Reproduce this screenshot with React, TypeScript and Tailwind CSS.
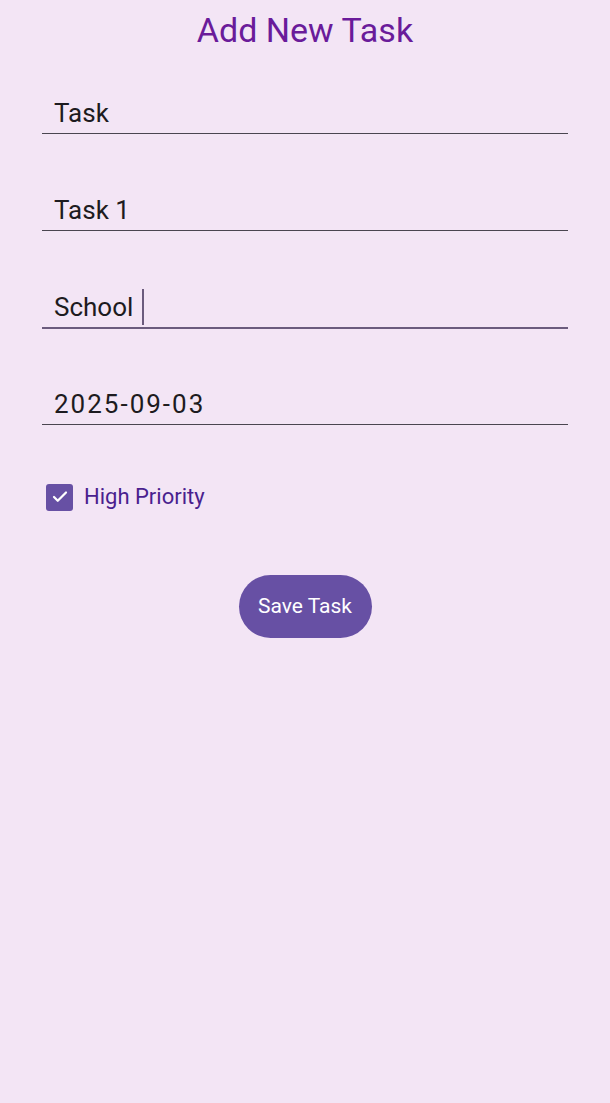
import { Check } from "lucide-react";

type FieldProps = {
	value: string;
	focused?: boolean;
	first?: boolean;
	wide?: boolean;
};

function Field({ value, focused, first, wide }: FieldProps) {
	return (
		<div className={first ? "" : "pt-[60px]"}>
			<div
				className={
					focused
						? "flex items-center h-[32px] pl-[12px] pb-[4px] box-content border-b-2 border-[#6b5b7d]"
						: "flex items-center h-[32px] pl-[12px] pb-[4px] box-content border-b border-[#4a4550]"
				}
			>
				<span className={wide ? "text-[26px] leading-[32px] tracking-[2px] text-[#1d1b20]" : "text-[26px] leading-[32px] text-[#1d1b20]"}>
					{value}
				</span>
				{focused && <span className="ml-[9px] inline-block w-[2px] h-[36px] bg-[#6b5b7d]" />}
			</div>
		</div>
	);
}

export default function App() {
	return (
		<div className="w-[610px] h-[1103px] bg-[#f3e5f5] font-['Roboto',sans-serif] overflow-hidden">
			<h1 className="pt-[10px] text-center text-[34px] leading-[40px] text-[#6a1b9a]">Add New Task</h1>

			<div className="px-[42px] pt-[47px]">
				<Field value="Task" first />
				<Field value="Task 1" />
				<Field value="School" focused />
				<div className="-mt-px">
					<Field value="2025-09-03" wide />
				</div>

				<label className="mt-[58px] ml-[4px] flex items-center gap-[11px]">
					<span className="w-[27px] h-[27px] rounded-[3px] bg-[#6750a4] flex items-center justify-center">
						<Check size={18} strokeWidth={3} className="text-white" />
					</span>
					<span className="text-[22px] leading-[28px] text-[#4a1f8f]">High Priority</span>
				</label>
			</div>

			<div className="flex justify-center pt-[64px]">
				<button className="w-[133px] h-[63px] rounded-full bg-[#6750a4] text-white text-[21px]">Save Task</button>
			</div>
		</div>
	);
}
